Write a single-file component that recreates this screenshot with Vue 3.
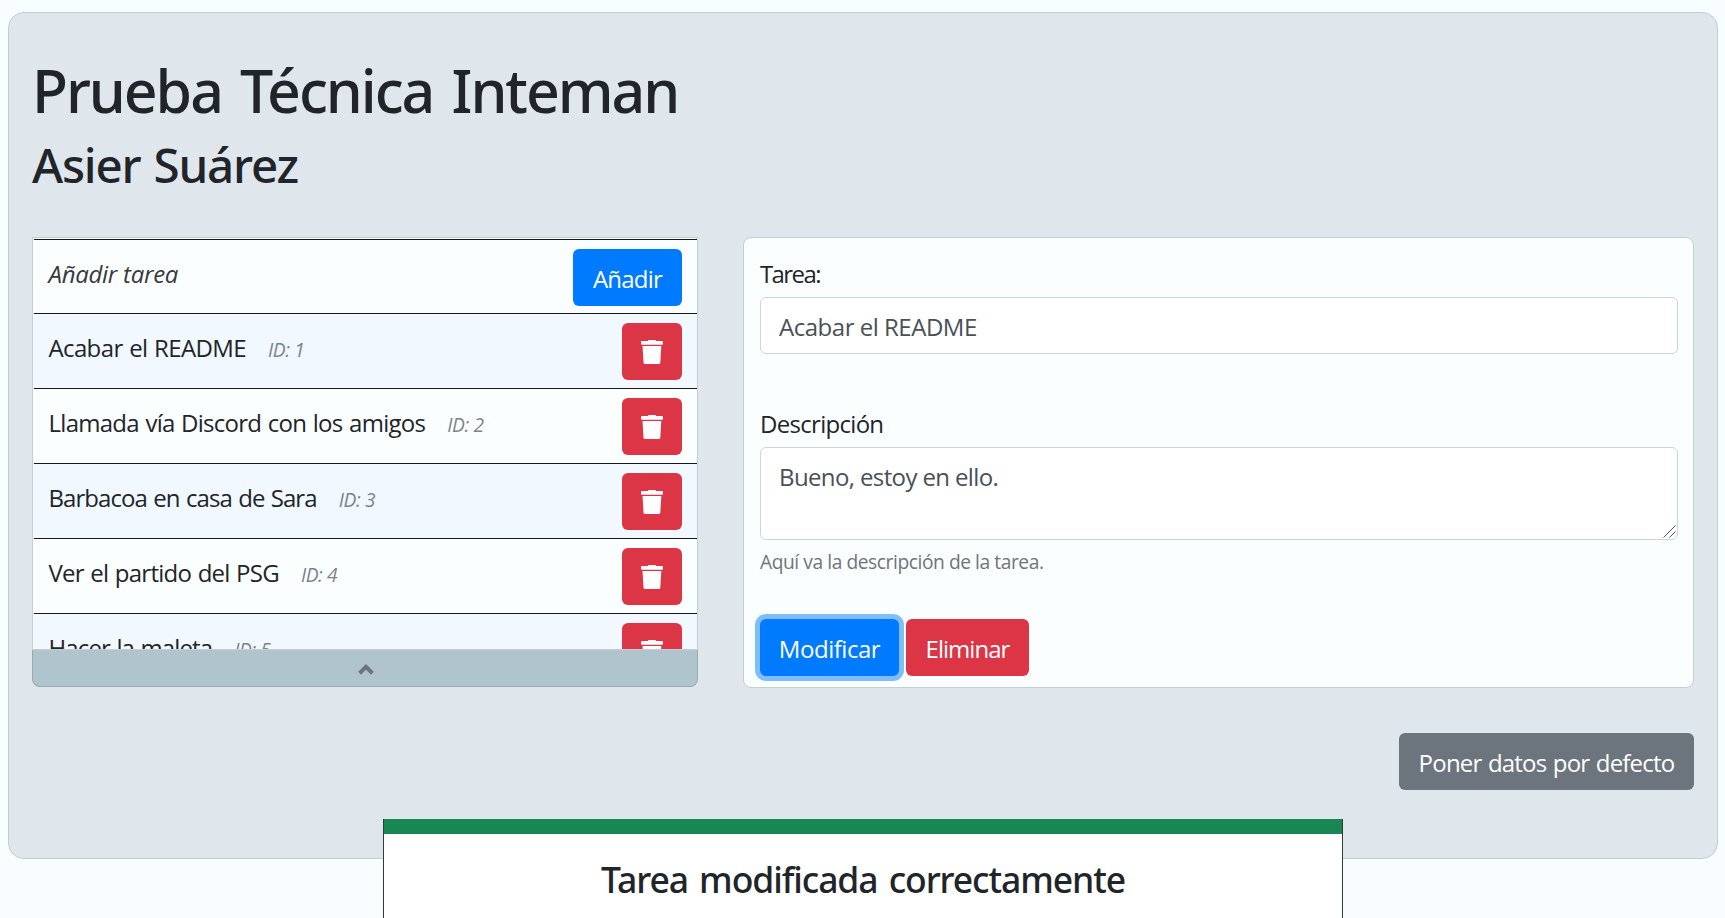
<script setup>
import { ref } from 'vue'

const tasks = ref([
  { id: 1, name: 'Acabar el README' },
  { id: 2, name: 'Llamada vía Discord con los amigos' },
  { id: 3, name: 'Barbacoa en casa de Sara' },
  { id: 4, name: 'Ver el partido del PSG' },
  { id: 5, name: 'Hacer la maleta' },
])
const title = ref('Acabar el README')
const description = ref('Bueno, estoy en ello.')
</script>

<template>
  <main class="shell">
    <h1>Prueba Técnica Inteman</h1>
    <h2>Asier Suárez</h2>

    <div class="columns">
      <section class="tasks">
        <div class="list">
          <div class="row row-new">
            <em class="placeholder">Añadir tarea</em>
            <button class="btn primary add">Añadir</button>
          </div>
          <div v-for="t in tasks" :key="t.id" class="row" :class="['task-' + t.id, { odd: t.id % 2 }]">
            <span class="name">{{ t.name }}</span>
            <em class="tid">ID: {{ t.id }}</em>
            <button class="btn danger trash" aria-label="Eliminar">
              <svg width="22" height="24" viewBox="0 0 22 24" fill="#fff">
                <path d="M7.600 0h6.800l.8 1H21q1 0 1 1v2q0 .8-1 .8H1Q0 4.800 0 4V2Q0 1 1 1h5.800z" />
                <path d="M1.500 6h18.800l-1 16.500q-.1 1.500-1.500 1.500H4q-1.400 0-1.500-1.500z" />
              </svg>
            </button>
          </div>
        </div>
        <div class="collapse">
          <svg width="16" height="11" viewBox="0 0 16 11" fill="none" stroke="#6c757d" stroke-width="4">
            <path d="M1.600 9.200 8 2.900l6.400 6.300" />
          </svg>
        </div>
      </section>

      <section class="editor">
        <label class="lbl-task" for="task">Tarea:</label>
        <input id="task" v-model="title" class="control" type="text" />
        <label class="lbl-desc" for="desc">Descripción</label>
        <div class="area-wrap">
          <textarea id="desc" v-model="description" class="control area" spellcheck="false"></textarea>
          <svg class="grip" width="13" height="13" viewBox="0 0 13 13" stroke="#555" stroke-width="1">
            <path d="M.5 12.500l12-12M6.500 12.500l6-6" />
          </svg>
        </div>
        <small>Aquí va la descripción de la tarea.</small>
        <div class="actions">
          <button class="btn primary focused">Modificar</button>
          <button class="btn danger remove">Eliminar</button>
        </div>
      </section>
    </div>

    <div class="footer">
      <button class="btn secondary">Poner datos por defecto</button>
    </div>
  </main>

  <div class="toast">Tarea modificada correctamente</div>
</template>

<style>
body {
  background: #f8fdff;
  overflow: hidden;
}
</style>

<style scoped>
* {
  box-sizing: border-box;
}
.shell {
  margin: 12px 7px 0 8px;
  height: 847px;
  padding: 0 23px;
  border: 1px solid #c0ced3;
  border-radius: 16px;
  background: #dfe6ec;
  color: #212529;
  font: 24px/36px "Open Sans", "Noto Sans", sans-serif;
  overflow: hidden;
}
h1,
h2 {
  margin: 0;
  font-family: "Noto Sans", sans-serif;
  font-weight: 500;
  white-space: nowrap;
}
h1 {
  margin-top: 41px;
  font-size: 59px;
  line-height: 72px;
  letter-spacing: -2.05px;
  word-spacing: 5px;
}
h2 {
  margin-top: 10px;
  font-size: 47.500px;
  line-height: 58px;
  letter-spacing: -1.2px;
  word-spacing: 2px;
}
.columns {
  display: grid;
  grid-template-columns: 666px 951px;
  gap: 45px;
  margin-top: 43px;
}
.tasks {
  height: 450px;
}
.list {
  display: grid;
  grid-template-rows: 74px repeat(5, 75px);
  height: 413px;
  padding: 1px 0 1px 1px;
  border: 1px solid #c3ced5;
  background: #fbfeff;
  overflow: hidden;
}
.row {
  display: flex;
  align-items: flex-start;
  border-top: 1px solid #16191c;
  padding: 9px 15px 0 14.500px;
  white-space: nowrap;
  overflow: hidden;
}
.row.odd {
  background: #f1f8ff;
}
.name,
.placeholder,
.tid {
  margin-top: 7px;
}
.name {
  word-spacing: 1px;
}
.placeholder {
  letter-spacing: -0.28px;
  color: #343a40;
}
.tid {
  margin-left: 22px;
  color: #7b848b;
  font-size: 19.2px;
  line-height: 39px;
  letter-spacing: -0.4px;
}
.task-1 .name { letter-spacing: -0.63px; }
.task-2 .name { letter-spacing: -0.73px; }
.task-3 .name { letter-spacing: -0.93px; }
.task-4 .name { letter-spacing: -0.75px; }
.task-5 .name { letter-spacing: -0.86px; }
.btn {
  height: 57px;
  padding: 3px 0 0;
  border: 0;
  border-radius: 6px;
  color: #fff;
  font: inherit;
  text-align: center;
  white-space: nowrap;
}
.primary {
  background: #007bff;
}
.danger {
  background: #dc3545;
}
.secondary {
  width: 295px;
  background: #6c757d;
  letter-spacing: -0.8px;
  word-spacing: 1px;
}
.add {
  width: 109px;
  margin-left: auto;
  letter-spacing: -0.79px;
}
.trash {
  display: flex;
  width: 60px;
  margin-left: auto;
  padding: 17px 0 0 19px;
}
.collapse {
  display: flex;
  height: 37px;
  padding: 14px 0 0 325px;
  border: 1px solid #94abb3;
  border-top: 0;
  border-radius: 0 0 8px 8px;
  background: #afc4cd;
}
.editor {
  display: flex;
  flex-direction: column;
  height: 451px;
  padding: 18px 15px 0 16px;
  border: 1px solid #c3ced5;
  border-radius: 8px;
  background: #fbfeff;
}
.lbl-task {
  letter-spacing: -1.6px;
}
.lbl-desc {
  margin-top: 52px;
  letter-spacing: -0.7px;
}
.control {
  width: 100%;
  height: 57px;
  margin: 5px 0 0;
  padding: 2px 18px 0;
  border: 1px solid #ced4da;
  border-radius: 6px;
  background: #fff;
  color: #495057;
  font: inherit;
  letter-spacing: -0.48px;
  outline: none;
}
.area-wrap {
  position: relative;
  height: 93px;
  margin-top: 5px;
}
.area {
  display: block;
  height: 93px;
  margin: 0;
  padding-top: 11px;
  resize: none;
  overflow: hidden;
  letter-spacing: -0.62px;
}
.grip {
  position: absolute;
  right: 2px;
  bottom: 2px;
}
small {
  margin-top: 8px;
  color: #6c757d;
  font-size: 19.2px;
  line-height: 28px;
  letter-spacing: -0.43px;
}
.actions {
  display: flex;
  gap: 7px;
  margin-top: 43px;
}
.focused {
  width: 139px;
  box-shadow: 0 0 0 5px #80bdff;
  letter-spacing: -0.47px;
}
.remove {
  width: 123px;
  letter-spacing: -0.97px;
}
.footer {
  display: flex;
  justify-content: flex-end;
  margin-top: 45px;
}
.toast {
  position: fixed;
  left: 383px;
  top: 819px;
  width: 960px;
  height: 160px;
  padding-top: 24px;
  border: solid #343a40;
  border-width: 0 1px;
  background: linear-gradient(#198754 15px, #fff 15px);
  color: #212529;
  font: 500 35.500px/72px "Noto Sans", sans-serif;
  letter-spacing: -1.08px;
  word-spacing: 3px;
  text-align: center;
}
</style>
